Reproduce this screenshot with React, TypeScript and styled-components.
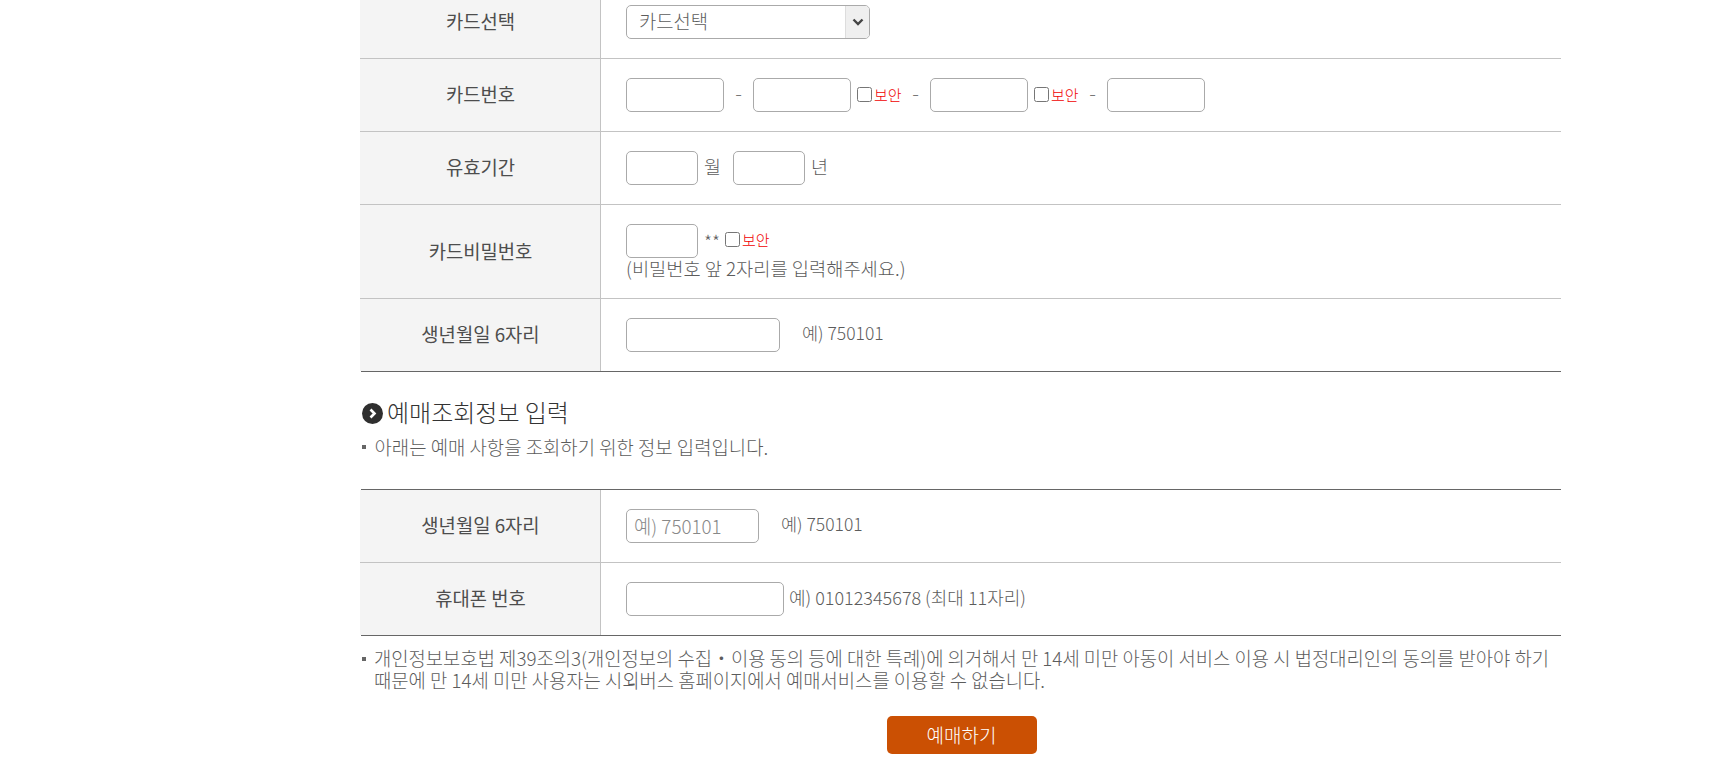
import React from "react";
import styled, { createGlobalStyle } from "styled-components";

const Global = createGlobalStyle`
  html, body { margin: 0; padding: 0; background: #fff; height: 776px; overflow: hidden; }
  body { font-family: "Noto Sans CJK KR", "Noto Sans", sans-serif; color: #5c5c5c; font-size: 18.85px; font-weight: 300; }
  * { box-sizing: border-box; }
`;

const Page = styled.main`
  width: 1201px;
  margin: -14px 0 0 360px;
`;
const Row = styled.div<{ $h?: number; $last?: boolean }>`
  display: grid;
  grid-template-columns: 240px 960px;
  height: ${(p) => p.$h ?? 73}px;
  border-bottom: ${(p) => (p.$last ? "none" : "1px solid #c3c3c3")};
`;
const Th = styled.div`
  display: flex;
  align-items: center;
  justify-content: center;
  padding: 0 0 3px 1px;
  background: #f4f4f4;
  color: #4d4d4d;
  font-size: 18.8px;
  font-weight: 400;
`;
const Td = styled.div`
  display: flex;
  flex-direction: column;
  justify-content: center;
  padding-left: 25px;
  border-left: 1px solid #c3c3c3;
`;
const Line = styled.div`
  display: flex;
  align-items: center;
  height: 34px;
`;
const Input = styled.input<{ $w: number }>`
  width: ${(p) => p.$w}px;
  height: 34px;
  padding: 0 7px 2px;
  border: 1px solid #aaa;
  border-radius: 5px;
  background: #fff;
  font: inherit;
  font-size: 18.8px;
  color: #666;
  outline: none;
  &::placeholder { color: #888; opacity: 1; }
`;
const SelectWrap = styled.div`
  position: relative;
  width: 244px;
  height: 34px;
`;
const Select = styled.select`
  appearance: none;
  width: 100%;
  height: 100%;
  padding: 0 0 3px 12px;
  border: 1px solid #aaa;
  border-radius: 5px;
  background: #fff;
  font: inherit;
  font-size: 18.8px;
  color: #5c5c5c;
`;
const Arrow = styled.span`
  position: absolute;
  top: 1px;
  right: 1px;
  bottom: 1px;
  width: 24px;
  display: flex;
  align-items: center;
  justify-content: center;
  background: #efefef;
  border-left: 1px solid #ddd;
  border-radius: 0 4px 4px 0;
  pointer-events: none;
`;
const Dash = styled.span<{ $w: number }>`
  width: ${(p) => p.$w}px;
  padding-bottom: 6px;
  text-align: center;
  font-size: 20px;
  color: #777;
`;
const Check = styled.input.attrs({ type: "checkbox" })<{ $ml?: number }>`
  width: 15px;
  height: 15px;
  margin: 0 0 2px ${(p) => p.$ml ?? 6}px;
  flex: none;
`;
const Secure = styled.span`
  width: 27px;
  margin-left: 2px;
  padding-bottom: 2px;
  color: #f00000;
  font-size: 15px;
  font-weight: 300;
  white-space: nowrap;
`;
const Unit = styled.span<{ $ml?: number; $mr?: number; $size?: number; $pb?: number }>`
  margin-left: ${(p) => p.$ml ?? 6}px;
  margin-right: ${(p) => p.$mr ?? 0}px;
  padding-bottom: ${(p) => p.$pb ?? 5}px;
  font-size: ${(p) => p.$size ?? 18.5}px;
  white-space: nowrap;
`;
const Hint = styled.div`
  height: 22px;
  line-height: 20px;
  font-size: 18.7px;
  white-space: nowrap;
`;
const Rule = styled.hr`
  width: 1200px;
  height: 1px;
  margin: 0 0 0 1px;
  border: 0;
  background: #666;
`;
const Heading = styled.h2`
  display: flex;
  align-items: center;
  gap: 4px;
  height: 21px;
  margin: 31px 0 0 2px;
  color: #333;
  font-size: 24px;
  font-weight: 300;
`;
const HeadingText = styled.span`
  padding-bottom: 4px;
`;
const Note = styled.p`
  position: relative;
  margin: 12px 0 31px 0;
  padding-left: 14.5px;
  line-height: 22px;
  white-space: nowrap;
  &::before {
    content: "";
    position: absolute;
    left: 2px;
    top: 9px;
    width: 4px;
    height: 4px;
    background: #666;
  }
`;
const Notice = styled(Note)`
  margin: 12px 0 0 0;
  padding-left: 14px;
  font-size: 18.8px;
  line-height: 22px;
  & > span { position: relative; top: -1px; display: block; }
`;
const Actions = styled.div`
  display: flex;
  justify-content: center;
  padding-left: 2px;
  margin-top: 24px;
`;
const Button = styled.button`
  width: 150px;
  height: 38px;
  padding: 0 0 2px;
  border: 0;
  border-radius: 5px;
  background: #cb5003;
  color: #fff;
  font: inherit;
  font-size: 19px;
`;

const Chevron = () => (
  <svg width="12" height="10" viewBox="0 0 12 10">
    <path d="M1.5 2.5 6 7l4.5-4.5" fill="none" stroke="#444" strokeWidth="2.4" />
  </svg>
);
const Bullet = () => (
  <svg width="21" height="21" viewBox="0 0 21 21">
    <circle cx="10.5" cy="10.5" r="10.5" fill="#2f2f2f" />
    <path d="M8.5 6.5 12.5 10.5 8.5 14.5" fill="none" stroke="#fff" strokeWidth="2.6" />
  </svg>
);

export default function App() {
  return (
    <>
      <Global />
      <Page>
        <Row>
          <Th>카드선택</Th>
          <Td>
            <Line>
              <SelectWrap>
                <Select defaultValue="">
                  <option value="">카드선택</option>
                </Select>
                <Arrow><Chevron /></Arrow>
              </SelectWrap>
            </Line>
          </Td>
        </Row>
        <Row>
          <Th>카드번호</Th>
          <Td>
            <Line>
              <Input $w={98} />
              <Dash $w={29}>-</Dash>
              <Input $w={98} />
              <Check />
              <Secure>보안</Secure>
              <Dash $w={29}>-</Dash>
              <Input $w={98} />
              <Check />
              <Secure>보안</Secure>
              <Dash $w={29}>-</Dash>
              <Input $w={98} />
            </Line>
          </Td>
        </Row>
        <Row>
          <Th>유효기간</Th>
          <Td>
            <Line>
              <Input $w={72} />
              <Unit $mr={12}>월</Unit>
              <Input $w={72} />
              <Unit>년</Unit>
            </Line>
          </Td>
        </Row>
        <Row $h={94}>
          <Th>카드비밀번호</Th>
          <Td>
            <Line>
              <Input $w={72} />
              <Unit $size={18} $pb={0}>**</Unit>
              <Check $ml={5} />
              <Secure>보안</Secure>
            </Line>
            <Hint>(비밀번호 앞 2자리를 입력해주세요.)</Hint>
          </Td>
        </Row>
        <Row $h={72} $last>
          <Th>생년월일 6자리</Th>
          <Td>
            <Line>
              <Input $w={154} />
              <Unit $ml={22} $size={17.5}>예) 750101</Unit>
            </Line>
          </Td>
        </Row>
        <Rule />
        <Heading><Bullet /><HeadingText>예매조회정보 입력</HeadingText></Heading>
        <Note>아래는 예매 사항을 조회하기 위한 정보 입력입니다.</Note>
        <Rule />
        <Row>
          <Th>생년월일 6자리</Th>
          <Td>
            <Line>
              <Input $w={133} placeholder="예) 750101" />
              <Unit $ml={22} $size={17.5}>예) 750101</Unit>
            </Line>
          </Td>
        </Row>
        <Row $h={72} $last>
          <Th>휴대폰 번호</Th>
          <Td>
            <Line>
              <Input $w={158} />
              <Unit $ml={5} $size={18}>예) 01012345678 (최대 11자리)</Unit>
            </Line>
          </Td>
        </Row>
        <Rule />
        <Notice>
          <span>개인정보보호법 제39조의3(개인정보의 수집・이용 동의 등에 대한 특례)에 의거해서 만 14세 미만 아동이 서비스 이용 시 법정대리인의 동의를 받아야 하기</span>
          <span>때문에 만 14세 미만 사용자는 시외버스 홈페이지에서 예매서비스를 이용할 수 없습니다.</span>
        </Notice>
        <Actions><Button>예매하기</Button></Actions>
      </Page>
    </>
  );
}
